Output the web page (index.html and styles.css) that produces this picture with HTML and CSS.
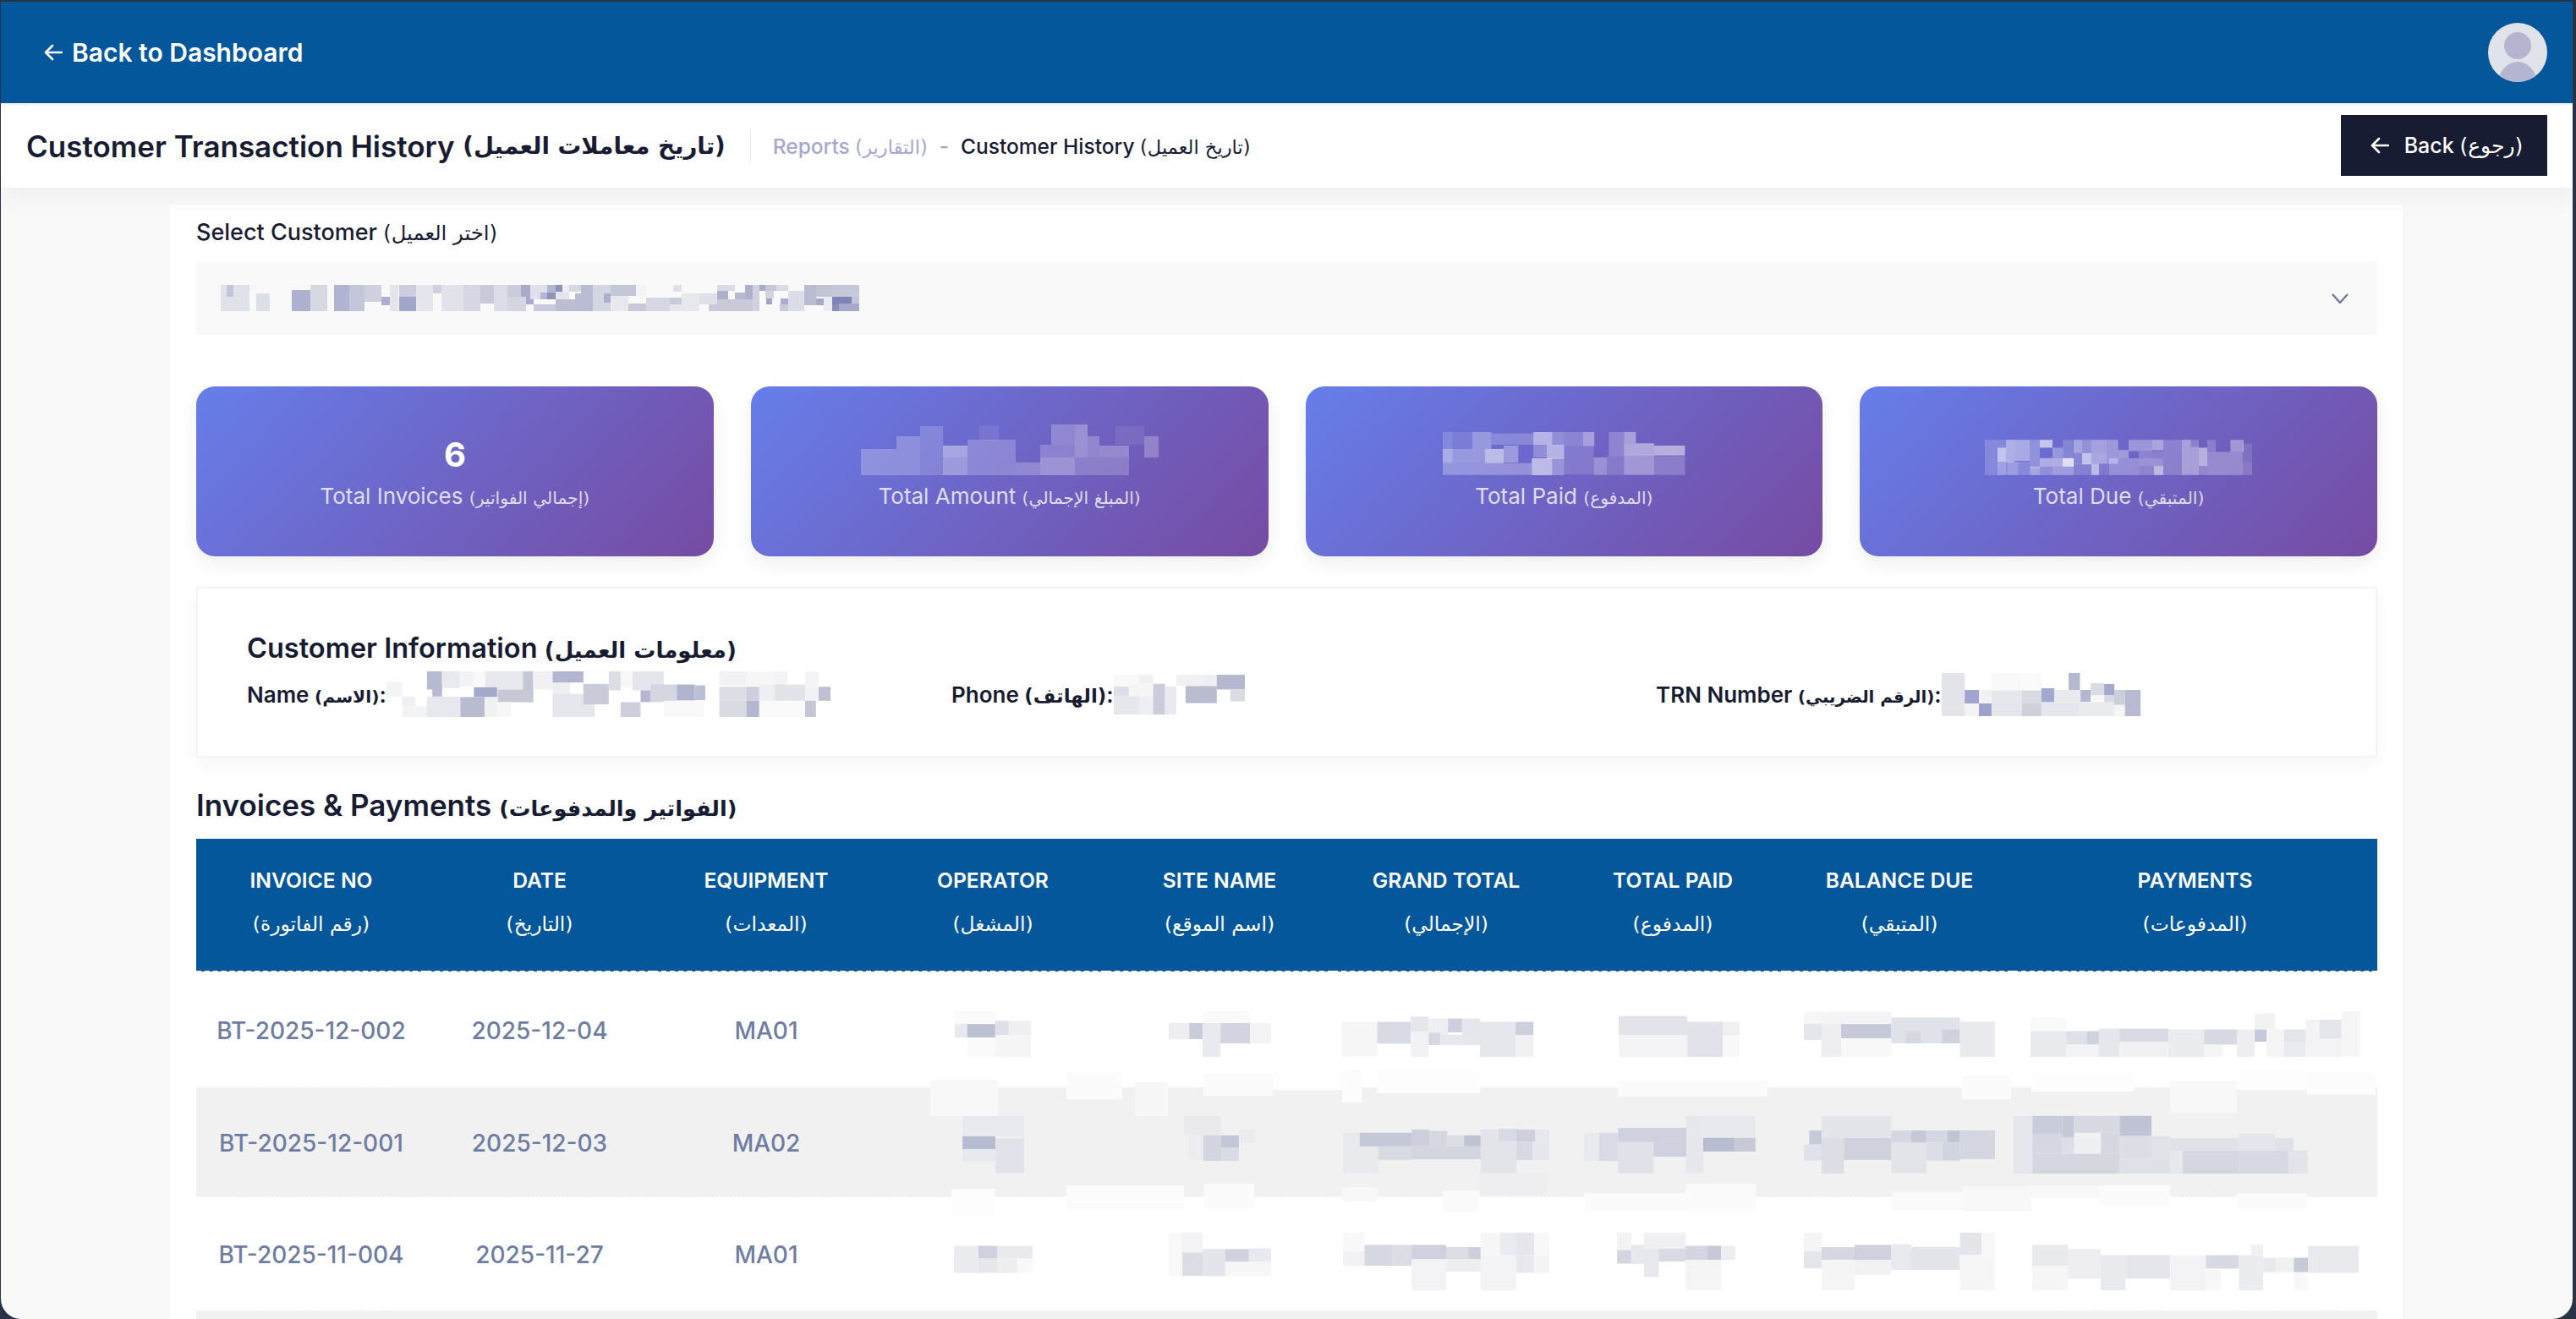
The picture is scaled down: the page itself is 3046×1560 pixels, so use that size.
FILE: index.html
```html
<!DOCTYPE html>
<html lang="en">
<head>
<meta charset="utf-8">
<title>Customer Transaction History</title>
<link rel="stylesheet" href="styles.css">
</head>
<body>
<div class="window">
  <header class="topbar">
    <a class="dash-link"><svg class="ico-back" viewBox="0 0 22 20"><path d="M21 10H2M10 2L2 10l8 8"/></svg>Back to Dashboard</a>
    <svg class="avatar" viewBox="0 0 70 70"><defs><clipPath id="av"><circle cx="35" cy="35" r="35"/></clipPath></defs><circle cx="35" cy="35" r="35" fill="#e1e3ea"/><g clip-path="url(#av)"><circle cx="35" cy="27" r="16" fill="#b5b5d0"/><ellipse cx="35" cy="76" rx="24" ry="30" fill="#b5b5d0"/></g></svg>
  </header>
  <section class="subbar">
    <div class="subbar-left">
      <h1 class="page-title">Customer Transaction History <span class="ar">(تاريخ معاملات العميل)</span></h1>
      <nav class="crumbs"><span class="crumb-muted">Reports <span class="ar">(التقارير)</span></span><span class="crumb-sep">-</span><span class="crumb-now">Customer History <span class="ar">(تاريخ العميل)</span></span></nav>
    </div>
    <a class="btn-back"><svg class="ico-back" viewBox="0 0 22 20"><path d="M21 10H2M10 2L2 10l8 8"/></svg><span>Back <span class="ar">(رجوع)</span></span></a>
  </section>
  <main class="content">
    <div class="card">
      <label class="select-label">Select Customer <span class="ar">(اختر العميل)</span></label>
      <div class="select">
        <svg class="m" width="756" height="31" viewBox="261 336 756 31"><g>
<rect x="261" y="336" width="34" height="31" fill="#e0e2ea"/><rect x="268" y="336" width="8" height="14" fill="#c2c5da"/><rect x="295" y="336" width="50" height="6" fill="#f8f8f9"/><rect x="303" y="346" width="16" height="21" fill="#dddfe8"/><rect x="345" y="342" width="22" height="25" fill="#adb1cd"/><rect x="367" y="336" width="20" height="31" fill="#d6d8e4"/><rect x="395" y="336" width="18" height="31" fill="#b1b4d1"/><rect x="413" y="336" width="18" height="31" fill="#c4c6da"/><rect x="431" y="336" width="20" height="20" fill="#cfd1df"/><rect x="451" y="350" width="10" height="10" fill="#abaed0"/><rect x="461" y="336" width="10" height="31" fill="#e4e5ec"/><rect x="472" y="336" width="20" height="31" fill="#cccedf"/><rect x="472" y="350" width="20" height="17" fill="#a3a6cb"/><rect x="492" y="336" width="20" height="31" fill="#e4e5ed"/><rect x="512" y="336" width="10" height="10" fill="#cdd0de"/><rect x="522" y="336" width="26" height="31" fill="#e2e3ea"/><rect x="548" y="336" width="20" height="31" fill="#d5d7e3"/><rect x="568" y="336" width="16" height="22" fill="#c8cadb"/><rect x="584" y="336" width="16" height="31" fill="#dcdee7"/>
<rect x="600" y="336" width="16" height="20" fill="#c9ccdb"/><rect x="616" y="336" width="11" height="14" fill="#a8abca"/><rect x="600" y="350" width="22" height="17" fill="#d3d5e1"/><rect x="622" y="350" width="9" height="9" fill="#a6a9ca"/><rect x="627" y="336" width="20" height="17" fill="#dfe1ea"/><rect x="647" y="336" width="10" height="9" fill="#b3b6cf"/><rect x="657" y="336" width="8" height="8" fill="#8c90bd"/><rect x="639" y="345" width="8" height="8" fill="#b4b7d3"/><rect x="647" y="345" width="10" height="8" fill="#8f93ba"/><rect x="657" y="344" width="16" height="9" fill="#e4e5ec"/><rect x="673" y="344" width="7" height="9" fill="#fff"/><rect x="665" y="336" width="8" height="8" fill="#eeeff3"/><rect x="673" y="336" width="14" height="8" fill="#d6d8e3"/><rect x="687" y="336" width="14" height="17" fill="#b9bcd2"/><rect x="631" y="359" width="26" height="8" fill="#c8cadb"/><rect x="657" y="353" width="23" height="14" fill="#bbbdd3"/><rect x="680" y="346" width="21" height="21" fill="#b9bcd2"/><rect x="701" y="336" width="21" height="31" fill="#d4d6e2"/><rect x="714" y="346" width="8" height="11" fill="#adb0cc"/><rect x="722" y="336" width="30" height="13" fill="#c4c7d9"/><rect x="722" y="349" width="21" height="18" fill="#e8e9ef"/><rect x="743" y="358" width="21" height="9" fill="#c7c9da"/><rect x="752" y="336" width="12" height="13" fill="#f3f3f4"/><rect x="764" y="351" width="28" height="16" fill="#d5d7e3"/><rect x="792" y="351" width="14" height="8" fill="#c8cbda"/><rect x="796" y="336" width="10" height="8" fill="#dfe1e9"/><rect x="806" y="346" width="21" height="21" fill="#e7e8ed"/><rect x="792" y="359" width="14" height="8" fill="#e6e7ed"/><rect x="827" y="346" width="21" height="13" fill="#dfe1e8"/><rect x="838" y="359" width="60" height="8" fill="#c8cad9"/><rect x="848" y="336" width="21" height="7" fill="#d9dbe5"/><rect x="848" y="343" width="13" height="10" fill="#adb0cd"/><rect x="848" y="353" width="50" height="6" fill="#c8cad9"/><rect x="869" y="345" width="12" height="8" fill="#b7bad1"/><rect x="881" y="336" width="9" height="17" fill="#aeb1cc"/><rect x="890" y="336" width="8" height="31" fill="#d0d2df"/><rect x="898" y="336" width="7" height="7" fill="#a8aaca"/><rect x="905" y="336" width="13" height="7" fill="#c6c8d9"/><rect x="905" y="343" width="10" height="9" fill="#d1d3e0"/><rect x="918" y="336" width="14" height="7" fill="#dadbe4"/><rect x="906" y="352" width="7" height="7" fill="#a1a4c8"/><rect x="923" y="352" width="9" height="7" fill="#a9accb"/><rect x="922" y="359" width="10" height="8" fill="#c8cad9"/><rect x="932" y="343" width="19" height="24" fill="#dcdee7"/><rect x="951" y="336" width="14" height="24" fill="#b9bcd1"/><rect x="965" y="336" width="19" height="14" fill="#c3c5d6"/><rect x="965" y="352" width="9" height="8" fill="#a6a9ca"/><rect x="974" y="350" width="10" height="17" fill="#ecedf1"/><rect x="984" y="336" width="32" height="14" fill="#c5c8d9"/><rect x="984" y="350" width="23" height="9" fill="#7f84b7"/><rect x="984" y="359" width="8" height="8" fill="#8a8ebb"/><rect x="992" y="358" width="24" height="9" fill="#a6a9c9"/><rect x="1007" y="350" width="9" height="8" fill="#c3c5d6"/>
        </g></svg>
        <svg class="chev" viewBox="0 0 20 12"><path d="M1 1l9 10 9-10"/></svg>
      </div>

      <div class="stats">
        <div class="stat">
          <div class="stat-value">6</div>
          <div class="stat-label">Total Invoices <span class="ar">(إجمالي الفواتير)</span></div>
        </div>
        <div class="stat">
          <div class="stat-value"><svg class="m m-soft" width="352" height="60" viewBox="1017 501 352 60" fill="#fff"><rect x="1017" y="530" width="70" height="31" fill-opacity=".3"/><rect x="1059" y="515" width="28" height="15" fill-opacity=".3"/><rect x="1087" y="503" width="27" height="58" fill-opacity=".22"/><rect x="1114" y="526" width="29" height="14" fill-opacity=".5"/><rect x="1114" y="540" width="29" height="21" fill-opacity=".42"/><rect x="1143" y="519" width="57" height="42" fill-opacity=".27"/><rect x="1157" y="502" width="23" height="18" fill-opacity=".1"/><rect x="1200" y="546" width="29" height="15" fill-opacity=".3"/><rect x="1229" y="525" width="41" height="15" fill-opacity=".25"/><rect x="1229" y="540" width="41" height="21" fill-opacity=".4"/><rect x="1242" y="501" width="28" height="24" fill-opacity=".3"/><rect x="1270" y="501" width="15" height="39" fill-opacity=".38"/><rect x="1285" y="515" width="14" height="25" fill-opacity=".3"/><rect x="1270" y="540" width="64" height="21" fill-opacity=".25"/><rect x="1299" y="526" width="35" height="14" fill-opacity=".33"/><rect x="1318" y="503" width="34" height="22" fill-opacity=".1"/><rect x="1352" y="515" width="17" height="25" fill-opacity=".3"/></svg></div>
          <div class="stat-label">Total Amount <span class="ar">(المبلغ الإجمالي)</span></div>
        </div>
        <div class="stat">
          <div class="stat-value"><svg class="m" width="287" height="51" viewBox="790 210 450 153" preserveAspectRatio="none" fill="#fff"><rect x="790" y="210" width="18" height="110" fill-opacity=".18"/><rect x="808" y="210" width="37" height="60" fill-opacity=".1"/><rect x="845" y="210" width="35" height="60" fill-opacity=".3"/><rect x="880" y="215" width="78" height="40" fill-opacity=".2"/><rect x="958" y="210" width="35" height="45" fill-opacity=".5"/><rect x="993" y="210" width="22" height="45" fill-opacity=".25"/><rect x="1015" y="210" width="35" height="50" fill-opacity=".2"/><rect x="1050" y="210" width="21" height="50" fill-opacity=".38"/><rect x="1098" y="210" width="28" height="85" fill-opacity=".22"/><rect x="1126" y="210" width="22" height="40" fill-opacity=".4"/><rect x="1126" y="250" width="56" height="45" fill-opacity=".45"/><rect x="1182" y="258" width="57" height="35" fill-opacity=".5"/><rect x="868" y="270" width="35" height="50" fill-opacity=".55"/><rect x="903" y="258" width="27" height="60" fill-opacity=".33"/><rect x="958" y="255" width="25" height="45" fill-opacity=".25"/><rect x="983" y="255" width="32" height="50" fill-opacity=".5"/><rect x="790" y="270" width="78" height="50" fill-opacity=".3"/><rect x="790" y="320" width="165" height="42" fill-opacity=".28"/><rect x="955" y="303" width="38" height="60" fill-opacity=".55"/><rect x="993" y="303" width="22" height="60" fill-opacity=".3"/><rect x="1015" y="260" width="55" height="100" fill-opacity=".14"/><rect x="1070" y="300" width="24" height="62" fill-opacity=".3"/><rect x="1094" y="295" width="32" height="67" fill-opacity=".16"/><rect x="1126" y="295" width="56" height="67" fill-opacity=".35"/><rect x="1182" y="295" width="57" height="67" fill-opacity=".2"/></svg></div>
          <div class="stat-label">Total Paid <span class="ar">(المدفوع)</span></div>
        </div>
        <div class="stat">
          <div class="stat-value"><svg class="m" width="316" height="42" viewBox="132 82 948 125" fill="#fff"><rect x="132" y="82" width="75" height="125" fill-opacity=".18"/><rect x="207" y="82" width="30" height="80" fill-opacity=".45"/><rect x="177" y="110" width="30" height="50" fill-opacity=".5"/><rect x="237" y="82" width="55" height="75" fill-opacity=".42"/><rect x="292" y="82" width="35" height="100" fill-opacity=".25"/><rect x="327" y="82" width="45" height="28" fill-opacity=".6"/><rect x="372" y="110" width="37" height="37" fill-opacity=".3"/><rect x="327" y="147" width="120" height="30" fill-opacity=".45"/><rect x="408" y="147" width="39" height="30" fill-opacity=".6"/><rect x="177" y="160" width="35" height="47" fill-opacity=".22"/><rect x="212" y="160" width="38" height="47" fill-opacity=".33"/><rect x="250" y="160" width="42" height="47" fill-opacity=".2"/><rect x="292" y="177" width="35" height="30" fill-opacity=".4"/><rect x="327" y="177" width="45" height="30" fill-opacity=".25"/><rect x="372" y="177" width="75" height="30" fill-opacity=".35"/><rect x="408" y="82" width="38" height="65" fill-opacity=".18"/><rect x="447" y="82" width="30" height="47" fill-opacity=".4"/><rect x="477" y="82" width="33" height="47" fill-opacity=".27"/><rect x="510" y="82" width="55" height="45" fill-opacity=".38"/><rect x="565" y="82" width="40" height="85" fill-opacity=".33"/><rect x="447" y="129" width="30" height="40" fill-opacity=".2"/><rect x="477" y="129" width="33" height="40" fill-opacity=".6"/><rect x="510" y="127" width="55" height="40" fill-opacity=".42"/><rect x="447" y="167" width="63" height="40" fill-opacity=".17"/><rect x="510" y="167" width="27" height="40" fill-opacity=".55"/><rect x="537" y="167" width="36" height="40" fill-opacity=".12"/><rect x="573" y="147" width="105" height="60" fill-opacity=".28"/><rect x="605" y="118" width="37" height="29" fill-opacity=".35"/><rect x="642" y="82" width="83" height="40" fill-opacity=".32"/><rect x="725" y="82" width="40" height="37" fill-opacity=".42"/><rect x="678" y="122" width="45" height="25" fill-opacity=".2"/><rect x="723" y="122" width="42" height="25" fill-opacity=".18"/><rect x="678" y="147" width="87" height="28" fill-opacity=".3"/><rect x="678" y="175" width="54" height="32" fill-opacity=".22"/><rect x="732" y="175" width="33" height="32" fill-opacity=".55"/><rect x="765" y="82" width="66" height="125" fill-opacity=".2"/><rect x="831" y="82" width="32" height="125" fill-opacity=".4"/><rect x="863" y="82" width="28" height="25" fill-opacity=".2"/><rect x="863" y="107" width="28" height="100" fill-opacity=".4"/><rect x="891" y="110" width="30" height="65" fill-opacity=".5"/><rect x="891" y="175" width="30" height="32" fill-opacity=".25"/><rect x="921" y="82" width="30" height="43" fill-opacity=".2"/><rect x="921" y="125" width="125" height="82" fill-opacity=".28"/><rect x="1003" y="82" width="47" height="43" fill-opacity=".35"/><rect x="1045" y="95" width="35" height="65" fill-opacity=".12"/><rect x="1045" y="160" width="35" height="47" fill-opacity=".18"/></svg></div>
          <div class="stat-label">Total Due <span class="ar">(المتبقي)</span></div>
        </div>
      </div>

      <section class="info">
        <h2 class="info-title">Customer Information <span class="ar">(معلومات العميل)</span></h2>
        <div class="info-grid">
          <div class="info-item"><b>Name <span class="ar">(الاسم)</span>:</b><svg class="m" width="525" height="54" viewBox="402 1075 823 163" preserveAspectRatio="none"><rect x="402" y="1113" width="29" height="52" fill="#f4f4f6"/><rect x="431" y="1165" width="24" height="35" fill="#eeeff2"/><rect x="431" y="1200" width="46" height="38" fill="#f3f3f5"/><rect x="477" y="1075" width="28" height="65" fill="#b7bbd2"/><rect x="487" y="1120" width="18" height="45" fill="#b5b9d1"/><rect x="505" y="1075" width="33" height="60" fill="#e9eaef"/><rect x="538" y="1075" width="25" height="55" fill="#f3f3f5"/><rect x="563" y="1075" width="22" height="55" fill="#f9f9fa"/><rect x="585" y="1075" width="70" height="65" fill="#e8e9ee"/><rect x="655" y="1075" width="19" height="110" fill="#c4c7d5"/><rect x="608" y="1140" width="66" height="45" fill="#c6c9d6"/><rect x="564" y="1132" width="43" height="35" fill="#a4a8c9"/><rect x="564" y="1167" width="20" height="30" fill="#d5d8e2"/><rect x="477" y="1165" width="62" height="73" fill="#e7e8ed"/><rect x="539" y="1167" width="45" height="71" fill="#b9bcd0"/><rect x="585" y="1167" width="23" height="71" fill="#f0f1f3"/><rect x="608" y="1185" width="25" height="53" fill="#f7f7f8"/><rect x="674" y="1075" width="36" height="65" fill="#f1f1f3"/><rect x="710" y="1115" width="32" height="100" fill="#eeeff2"/><rect x="710" y="1075" width="57" height="40" fill="#b2b5cf"/><rect x="710" y="1155" width="78" height="83" fill="#e6e7ec"/><rect x="767" y="1120" width="47" height="73" fill="#c9ccd8"/><rect x="814" y="1075" width="22" height="68" fill="#dcdee6"/><rect x="836" y="1075" width="22" height="55" fill="#f7f7f8"/><rect x="858" y="1075" width="58" height="68" fill="#e5e6ec"/><rect x="873" y="1143" width="19" height="42" fill="#b3b7cf"/><rect x="892" y="1122" width="48" height="63" fill="#d4d6e1"/><rect x="940" y="1122" width="33" height="57" fill="#b0b4cf"/><rect x="973" y="1125" width="20" height="53" fill="#bcc0d5"/><rect x="836" y="1185" width="37" height="53" fill="#cdd0dc"/><rect x="916" y="1180" width="74" height="58" fill="#f9f9fa"/><rect x="1019" y="1075" width="49" height="50" fill="#f1f1f3"/><rect x="1068" y="1075" width="52" height="50" fill="#f6f6f7"/><rect x="1120" y="1075" width="25" height="50" fill="#f3f3f5"/><rect x="1178" y="1075" width="25" height="55" fill="#f4f4f6"/><rect x="1019" y="1130" width="50" height="50" fill="#dcdee6"/><rect x="1019" y="1180" width="50" height="58" fill="#d9dbe3"/><rect x="1069" y="1130" width="24" height="50" fill="#cdd0dc"/><rect x="1069" y="1180" width="24" height="58" fill="#b4b8cf"/><rect x="1093" y="1122" width="28" height="58" fill="#eeeff2"/><rect x="1121" y="1122" width="57" height="58" fill="#e1e3e9"/><rect x="1178" y="1130" width="25" height="50" fill="#f2f2f4"/><rect x="1203" y="1130" width="22" height="50" fill="#bdc0d3"/><rect x="1093" y="1180" width="85" height="58" fill="#fafafa"/><rect x="1178" y="1180" width="20" height="58" fill="#c3c6d5"/></svg></div>
          <div class="info-item"><b>Phone <span class="ar ar-phone">(الهاتف)</span>:</b><svg class="m" width="155" height="47" viewBox="179 1090 243 140" preserveAspectRatio="none"><rect x="179" y="1090" width="47" height="45" fill="#f9f9fa"/><rect x="226" y="1090" width="26" height="32" fill="#f1f1f3"/><rect x="207" y="1122" width="45" height="42" fill="#f5f5f6"/><rect x="179" y="1132" width="28" height="33" fill="#dddfe7"/><rect x="179" y="1165" width="47" height="65" fill="#e6e7ec"/><rect x="226" y="1165" width="27" height="65" fill="#eeeff2"/><rect x="252" y="1122" width="22" height="108" fill="#c9ccd9"/><rect x="274" y="1132" width="21" height="98" fill="#e9eaef"/><rect x="295" y="1090" width="50" height="40" fill="#f1f1f3"/><rect x="345" y="1090" width="25" height="40" fill="#eeeff2"/><rect x="370" y="1090" width="52" height="52" fill="#b5b8ce"/><rect x="312" y="1130" width="58" height="60" fill="#b9bccf"/><rect x="395" y="1142" width="27" height="42" fill="#dadce4"/></svg></div>
          <div class="info-item"><b>TRN Number <span class="ar ar-trn">(الرقم الضريبي)</span>:</b><svg class="m" width="235" height="51" viewBox="899 45 614 153" preserveAspectRatio="none"><rect x="899" y="45" width="71" height="153" fill="#e3e4ea"/><rect x="970" y="105" width="44" height="48" fill="#a1a4cd"/><rect x="1014" y="105" width="39" height="48" fill="#f1f1f4"/><rect x="970" y="153" width="44" height="45" fill="#f3f3f5"/><rect x="1014" y="153" width="39" height="45" fill="#9da2cb"/><rect x="1053" y="45" width="94" height="62" fill="#f9f9fa"/><rect x="1053" y="107" width="94" height="91" fill="#e6e7ec"/><rect x="1147" y="45" width="60" height="62" fill="#fbfbfc"/><rect x="1147" y="107" width="60" height="45" fill="#d9dbe3"/><rect x="1147" y="152" width="60" height="46" fill="#ced1da"/><rect x="1207" y="148" width="120" height="50" fill="#e6e7ec"/><rect x="1207" y="99" width="40" height="49" fill="#a4a8ce"/><rect x="1247" y="105" width="80" height="43" fill="#e9eaee"/><rect x="1291" y="45" width="35" height="60" fill="#b4b8d0"/><rect x="1328" y="105" width="31" height="42" fill="#b3b6cf"/><rect x="1359" y="81" width="42" height="42" fill="#dadce5"/><rect x="1401" y="84" width="31" height="39" fill="#a4a8cf"/><rect x="1359" y="123" width="42" height="35" fill="#f6f6f7"/><rect x="1401" y="123" width="31" height="35" fill="#d8dae3"/><rect x="1327" y="148" width="105" height="50" fill="#eaebef"/><rect x="1432" y="158" width="33" height="40" fill="#f5f5f6"/><rect x="1432" y="105" width="33" height="53" fill="#ccceda"/><rect x="1465" y="105" width="48" height="93" fill="#b7bad0"/></svg></div>
        </div>
      </section>

      <h2 class="section-title">Invoices &amp; Payments <span class="ar">(الفواتير والمدفوعات)</span></h2>
      <div class="table-wrap">
        <table class="tx">
          <colgroup><col class="c-first"><col class="c-std"><col class="c-std"><col class="c-std"><col class="c-std"><col class="c-std"><col class="c-std"><col class="c-std"><col class="c-last"></colgroup>
          <thead>
            <tr>
              <th>INVOICE NO<span class="th-ar ar">(رقم الفاتورة)</span></th>
              <th>DATE<span class="th-ar ar">(التاريخ)</span></th>
              <th>EQUIPMENT<span class="th-ar ar">(المعدات)</span></th>
              <th>OPERATOR<span class="th-ar ar">(المشغل)</span></th>
              <th>SITE NAME<span class="th-ar ar">(اسم الموقع)</span></th>
              <th>GRAND TOTAL<span class="th-ar ar">(الإجمالي)</span></th>
              <th>TOTAL PAID<span class="th-ar ar">(المدفوع)</span></th>
              <th>BALANCE DUE<span class="th-ar ar">(المتبقي)</span></th>
              <th>PAYMENTS<span class="th-ar ar">(المدفوعات)</span></th>
            </tr>
          </thead>
          <tbody>
            <tr class="r1">
              <td>BT-2025-12-002</td><td>2025-12-04</td><td>MA01</td>
              <td><svg class="m" width="90" height="61" viewBox="49 597 141 160" preserveAspectRatio="none"><rect x="49" y="615" width="75" height="40" fill="#fafafa"/><rect x="49" y="655" width="23" height="42" fill="#e8e9ee"/><rect x="72" y="655" width="52" height="42" fill="#bcc1d2"/><rect x="124" y="645" width="25" height="45" fill="#dfe1e9"/><rect x="149" y="645" width="41" height="45" fill="#f0f0f3"/><rect x="72" y="697" width="52" height="60" fill="#fafafa"/><rect x="124" y="690" width="66" height="67" fill="#f5f5f6"/></svg></td>
              <td><svg class="m" width="121" height="61" viewBox="445 597 190 160" preserveAspectRatio="none"><rect x="508" y="615" width="88" height="38" fill="#fafafa"/><rect x="445" y="652" width="38" height="50" fill="#eeeef2"/><rect x="483" y="652" width="25" height="50" fill="#c9cdda"/><rect x="508" y="652" width="33" height="105" fill="#e9eaef"/><rect x="541" y="652" width="55" height="63" fill="#d2d5e0"/><rect x="596" y="652" width="39" height="63" fill="#f3f3f5"/></svg></td>
              <td><svg class="m" width="246" height="61" viewBox="764 597 385 160" preserveAspectRatio="none"><rect x="764" y="648" width="65" height="109" fill="#f6f6f7"/><rect x="829" y="648" width="62" height="68" fill="#d9dbe4"/><rect x="891" y="632" width="33" height="48" fill="#e6e7ed"/><rect x="924" y="638" width="36" height="50" fill="#eeeff3"/><rect x="960" y="638" width="26" height="43" fill="#ccd0dc"/><rect x="986" y="638" width="33" height="82" fill="#e6e7ec"/><rect x="891" y="680" width="33" height="77" fill="#f2f2f4"/><rect x="924" y="682" width="22" height="38" fill="#d5d8e2"/><rect x="946" y="688" width="40" height="32" fill="#e7e8ee"/><rect x="1019" y="648" width="66" height="109" fill="#e6e7ed"/><rect x="1085" y="648" width="33" height="42" fill="#ccd0dc"/><rect x="1085" y="690" width="33" height="67" fill="#f1f1f4"/></svg></td>
              <td><svg class="m" width="157" height="61" viewBox="1253 597 246 160" preserveAspectRatio="none"><rect x="1275" y="630" width="127" height="60" fill="#e3e4ea"/><rect x="1402" y="648" width="66" height="109" fill="#e2e3ea"/><rect x="1275" y="690" width="127" height="67" fill="#f4f4f6"/><rect x="1468" y="648" width="31" height="42" fill="#f0f0f3"/><rect x="1468" y="690" width="31" height="67" fill="#f8f8f9"/></svg></td>
              <td><svg class="m" width="226" height="61" viewBox="141 597 354 160" preserveAspectRatio="none"><rect x="141" y="617" width="33" height="38" fill="#f6f6f7"/><rect x="174" y="617" width="129" height="38" fill="#f4f4f6"/><rect x="141" y="655" width="33" height="50" fill="#e5e6ec"/><rect x="174" y="655" width="36" height="102" fill="#eeeef2"/><rect x="210" y="655" width="93" height="45" fill="#c6cad8"/><rect x="210" y="700" width="93" height="57" fill="#f8f8f9"/><rect x="303" y="635" width="127" height="80" fill="#e0e2e9"/><rect x="330" y="680" width="27" height="35" fill="#d5d8e1"/><rect x="397" y="672" width="33" height="43" fill="#cfd2dd"/><rect x="430" y="648" width="65" height="109" fill="#e9eaee"/></svg></td>
              <td><svg class="m" width="390" height="61" viewBox="558 597 612 160" preserveAspectRatio="none"><rect x="558" y="635" width="66" height="42" fill="#f9f9fa"/><rect x="558" y="677" width="66" height="80" fill="#e9eaee"/><rect x="624" y="677" width="38" height="42" fill="#dfe1e8"/><rect x="662" y="677" width="23" height="42" fill="#cfd2dd"/><rect x="624" y="719" width="61" height="38" fill="#f3f3f5"/><rect x="685" y="669" width="38" height="88" fill="#e6e7ed"/><rect x="723" y="669" width="91" height="42" fill="#d9dbe4"/><rect x="723" y="711" width="91" height="46" fill="#f1f1f4"/><rect x="814" y="672" width="66" height="85" fill="#ebecf0"/><rect x="880" y="672" width="61" height="47" fill="#d8dae3"/><rect x="880" y="719" width="35" height="38" fill="#f5f5f6"/><rect x="941" y="672" width="33" height="85" fill="#eeeef1"/><rect x="974" y="622" width="38" height="50" fill="#f2f2f3"/><rect x="974" y="672" width="22" height="38" fill="#c6cad8"/><rect x="996" y="672" width="32" height="85" fill="#f5f5f6"/><rect x="1028" y="672" width="41" height="38" fill="#e3e5ea"/><rect x="1028" y="710" width="41" height="47" fill="#eaebf0"/><rect x="1069" y="642" width="66" height="115" fill="#f3f3f5"/><rect x="1094" y="642" width="41" height="58" fill="#e5e6eb"/><rect x="1135" y="615" width="35" height="142" fill="#f6f6f7"/></svg></td>
            </tr>
            <tr class="r2">
              <td>BT-2025-12-001</td><td>2025-12-03</td><td>MA02</td>
              <td><svg class="m" width="73" height="72" viewBox="63 928 114 188" preserveAspectRatio="none"><rect x="63" y="938" width="114" height="63" fill="#e9eaef"/><rect x="63" y="1001" width="61" height="40" fill="#b8bcd0"/><rect x="124" y="1007" width="53" height="108" fill="#e2e3ea"/><rect x="63" y="1041" width="61" height="37" fill="#e8e9ee"/></svg></td>
              <td><svg class="m" width="84" height="72" viewBox="472 928 132 188" preserveAspectRatio="none"><rect x="472" y="938" width="68" height="60" fill="#e9e9ee"/><rect x="482" y="998" width="26" height="75" fill="#ecedf1"/><rect x="508" y="998" width="33" height="79" fill="#d3d6e1"/><rect x="541" y="998" width="33" height="37" fill="#c2c6d6"/><rect x="541" y="1035" width="33" height="42" fill="#dadce5"/><rect x="574" y="980" width="30" height="42" fill="#ececf0"/></svg></td>
              <td><svg class="m" width="244" height="72" viewBox="764 928 382 188" preserveAspectRatio="none"><rect x="764" y="990" width="65" height="125" fill="#e9eaee"/><rect x="795" y="990" width="96" height="42" fill="#c5c9d7"/><rect x="829" y="1032" width="62" height="42" fill="#d9dbe3"/><rect x="891" y="980" width="33" height="52" fill="#cdd0dc"/><rect x="924" y="984" width="33" height="48" fill="#d5d7e1"/><rect x="957" y="998" width="31" height="34" fill="#dcdee6"/><rect x="988" y="998" width="31" height="34" fill="#bfc3d3"/><rect x="891" y="1032" width="128" height="40" fill="#d3d5df"/><rect x="1019" y="980" width="33" height="38" fill="#e4e5eb"/><rect x="1052" y="978" width="33" height="40" fill="#d8dbe4"/><rect x="1085" y="980" width="35" height="38" fill="#cdd0dc"/><rect x="1120" y="980" width="26" height="38" fill="#e7e8ed"/><rect x="1019" y="1018" width="66" height="97" fill="#e3e4ea"/><rect x="1085" y="1018" width="30" height="56" fill="#d7d9e3"/><rect x="1115" y="1018" width="31" height="56" fill="#e6e7ec"/></svg></td>
              <td><svg class="m" width="211" height="72" viewBox="1212 928 331 188" preserveAspectRatio="none"><rect x="1212" y="990" width="28" height="87" fill="#e9eaee"/><rect x="1240" y="990" width="35" height="87" fill="#dadce5"/><rect x="1275" y="975" width="127" height="44" fill="#cfd2de"/><rect x="1275" y="1019" width="66" height="96" fill="#e1e2e9"/><rect x="1341" y="1019" width="61" height="45" fill="#cfd2de"/><rect x="1402" y="938" width="31" height="177" fill="#e7e8ed"/><rect x="1433" y="938" width="97" height="68" fill="#e8e9ee"/><rect x="1433" y="1006" width="59" height="42" fill="#b9bdd0"/><rect x="1492" y="1006" width="38" height="42" fill="#c6cad7"/></svg></td>
              <td><svg class="m" width="226" height="72" viewBox="141 928 354 188" preserveAspectRatio="none"><rect x="151" y="983" width="23" height="43" fill="#c6cad8"/><rect x="141" y="1026" width="33" height="50" fill="#e0e2e9"/><rect x="174" y="938" width="129" height="68" fill="#e4e5eb"/><rect x="174" y="1006" width="41" height="110" fill="#dcdee6"/><rect x="215" y="1006" width="88" height="68" fill="#cfd2dd"/><rect x="303" y="1020" width="65" height="95" fill="#e3e4ea"/><rect x="303" y="983" width="127" height="37" fill="#d5d7e1"/><rect x="340" y="983" width="27" height="37" fill="#c5c9d7"/><rect x="407" y="983" width="23" height="37" fill="#c0c4d3"/><rect x="368" y="1020" width="30" height="56" fill="#dcdee6"/><rect x="398" y="1020" width="32" height="56" fill="#d2d5df"/><rect x="430" y="983" width="65" height="88" fill="#d4d6e0"/></svg></td>
              <td><svg class="m" width="430" height="72" viewBox="523 928 675 188" preserveAspectRatio="none"><rect x="523" y="938" width="35" height="178" fill="#e6e7ec"/><rect x="558" y="938" width="55" height="55" fill="#c9ccda"/><rect x="613" y="938" width="22" height="67" fill="#c5c9d7"/><rect x="635" y="938" width="50" height="52" fill="#d7d9e3"/><rect x="685" y="938" width="35" height="52" fill="#d7d9e3"/><rect x="720" y="938" width="59" height="62" fill="#bfc3d3"/><rect x="558" y="993" width="55" height="62" fill="#d4d6e0"/><rect x="613" y="1005" width="22" height="50" fill="#dcdee5"/><rect x="635" y="1005" width="50" height="47" fill="#eeeff3"/><rect x="685" y="990" width="35" height="65" fill="#d4d6e0"/><rect x="720" y="1000" width="60" height="70" fill="#dcdee5"/><rect x="558" y="1055" width="162" height="61" fill="#d4d6e0"/><rect x="720" y="1070" width="94" height="46" fill="#dfe1e8"/><rect x="780" y="1000" width="34" height="70" fill="#e1e3e9"/><rect x="814" y="1006" width="127" height="40" fill="#e0e2e8"/><rect x="837" y="1046" width="104" height="70" fill="#d4d6e0"/><rect x="814" y="1046" width="23" height="70" fill="#e7e8ed"/><rect x="941" y="993" width="66" height="52" fill="#e5e6eb"/><rect x="941" y="1045" width="92" height="71" fill="#d7d9e2"/><rect x="1007" y="1006" width="36" height="40" fill="#e0e2e8"/><rect x="1033" y="1045" width="36" height="71" fill="#e3e4ea"/></svg></td>
            </tr>
            <tr class="r3">
              <td>BT-2025-11-004</td><td>2025-11-27</td><td>MA01</td>
              <td><svg class="m" width="93" height="83" viewBox="44 1258 146 218" preserveAspectRatio="none"><rect x="44" y="1338" width="45" height="84" fill="#ebecf0"/><rect x="89" y="1338" width="35" height="40" fill="#cfd2de"/><rect x="89" y="1378" width="35" height="44" fill="#e6e7ec"/><rect x="124" y="1338" width="66" height="40" fill="#e9eaee"/><rect x="124" y="1378" width="38" height="44" fill="#eeeef1"/><rect x="162" y="1378" width="28" height="44" fill="#f8f8f9"/></svg></td>
              <td><svg class="m" width="121" height="83" viewBox="445 1258 190 218" preserveAspectRatio="none"><rect x="445" y="1297" width="25" height="135" fill="#f8f8f9"/><rect x="470" y="1297" width="38" height="62" fill="#f3f3f5"/><rect x="470" y="1359" width="38" height="72" fill="#dbdde5"/><rect x="508" y="1348" width="42" height="84" fill="#e4e5eb"/><rect x="550" y="1348" width="44" height="40" fill="#cfd2de"/><rect x="550" y="1388" width="44" height="44" fill="#f7f7f8"/><rect x="594" y="1346" width="41" height="42" fill="#e8e9ee"/><rect x="594" y="1388" width="41" height="44" fill="#f7f7f8"/></svg></td>
              <td><svg class="m" width="244" height="83" viewBox="764 1258 382 218" preserveAspectRatio="none"><rect x="764" y="1297" width="40" height="58" fill="#f8f8f9"/><rect x="764" y="1355" width="40" height="45" fill="#f2f2f4"/><rect x="804" y="1335" width="52" height="65" fill="#d5d7e1"/><rect x="856" y="1335" width="35" height="65" fill="#dbdde5"/><rect x="891" y="1335" width="64" height="45" fill="#cfd2de"/><rect x="891" y="1380" width="64" height="96" fill="#f3f3f5"/><rect x="955" y="1342" width="41" height="38" fill="#dcdee6"/><rect x="996" y="1342" width="23" height="38" fill="#cdd0dc"/><rect x="955" y="1380" width="64" height="38" fill="#eeeef1"/><rect x="1019" y="1297" width="36" height="70" fill="#f6f6f7"/><rect x="1055" y="1297" width="30" height="70" fill="#eaebf0"/><rect x="1085" y="1297" width="33" height="70" fill="#e5e6eb"/><rect x="1118" y="1297" width="28" height="70" fill="#f8f8f9"/><rect x="1019" y="1367" width="66" height="109" fill="#f3f3f5"/><rect x="1085" y="1367" width="33" height="55" fill="#e8e9ee"/><rect x="1118" y="1367" width="28" height="55" fill="#f4f4f6"/></svg></td>
              <td><svg class="m" width="153" height="83" viewBox="1259 1258 240 218" preserveAspectRatio="none"><rect x="1275" y="1297" width="26" height="54" fill="#f3f3f5"/><rect x="1275" y="1351" width="26" height="42" fill="#d3d6e0"/><rect x="1301" y="1335" width="24" height="60" fill="#e7e8ed"/><rect x="1325" y="1297" width="77" height="50" fill="#f0f0f3"/><rect x="1325" y="1347" width="27" height="88" fill="#e7e8ed"/><rect x="1352" y="1347" width="50" height="40" fill="#d9dbe4"/><rect x="1402" y="1338" width="40" height="44" fill="#d3d6e0"/><rect x="1442" y="1338" width="26" height="44" fill="#c6cad8"/><rect x="1468" y="1338" width="26" height="44" fill="#eeeef1"/><rect x="1402" y="1382" width="66" height="94" fill="#f5f5f6"/></svg></td>
              <td><svg class="m" width="226" height="83" viewBox="141 1258 354 218" preserveAspectRatio="none"><rect x="141" y="1297" width="33" height="58" fill="#f5f5f6"/><rect x="141" y="1355" width="33" height="53" fill="#e5e6eb"/><rect x="174" y="1342" width="129" height="40" fill="#d5d7e1"/><rect x="235" y="1335" width="68" height="47" fill="#cfd2de"/><rect x="174" y="1382" width="61" height="94" fill="#f5f5f6"/><rect x="235" y="1382" width="68" height="46" fill="#f2f2f4"/><rect x="303" y="1333" width="37" height="80" fill="#e9eaee"/><rect x="340" y="1342" width="90" height="71" fill="#e3e4ea"/><rect x="430" y="1297" width="40" height="70" fill="#e4e5ea"/><rect x="470" y="1297" width="25" height="70" fill="#f7f7f8"/><rect x="430" y="1367" width="65" height="109" fill="#f6f6f7"/></svg></td>
              <td><svg class="m" width="386" height="83" viewBox="558 1258 605 218" preserveAspectRatio="none"><rect x="558" y="1335" width="66" height="66" fill="#e9eaee"/><rect x="558" y="1401" width="66" height="75" fill="#f6f6f7"/><rect x="624" y="1348" width="61" height="92" fill="#eeeef1"/><rect x="685" y="1367" width="46" height="109" fill="#e9eaee"/><rect x="731" y="1367" width="83" height="73" fill="#e5e6eb"/><rect x="814" y="1367" width="66" height="109" fill="#f3f3f5"/><rect x="880" y="1367" width="61" height="42" fill="#d8dae3"/><rect x="880" y="1409" width="27" height="67" fill="#f7f7f8"/><rect x="941" y="1367" width="45" height="109" fill="#ebecf0"/><rect x="964" y="1335" width="22" height="32" fill="#f0f0f3"/><rect x="986" y="1375" width="24" height="45" fill="#e8e9ee"/><rect x="1010" y="1375" width="33" height="45" fill="#f1f1f3"/><rect x="1043" y="1375" width="26" height="45" fill="#c6cad8"/><rect x="1069" y="1338" width="94" height="84" fill="#e9eaee"/><rect x="1043" y="1420" width="26" height="56" fill="#f8f8f9"/></svg></td>
            </tr>
            <tr class="r4"><td colspan="9"></td></tr>
          </tbody>
        </table>
        <svg class="band" width="1751" height="200" viewBox="1060 1260 1751 200"><rect x="1100" y="1277" width="80" height="43" fill="#f8f8f9"/><rect x="1261" y="1268" width="66" height="32" fill="#fbfbfb"/><rect x="1342" y="1280" width="39" height="40" fill="#f7f7f7"/><rect x="1423" y="1270" width="82" height="26" fill="#fbfbfb"/><rect x="1505" y="1266" width="85" height="23" fill="#fefefe"/><rect x="1587" y="1265" width="23" height="39" fill="#fcfcfc"/><rect x="1628" y="1266" width="122" height="27" fill="#fdfdfd"/><rect x="1913" y="1277" width="177" height="20" fill="#fbfbfb"/><rect x="2320" y="1272" width="58" height="28" fill="#fbfbfb"/><rect x="2402" y="1268" width="122" height="23" fill="#fdfdfd"/><rect x="2566" y="1278" width="79" height="38" fill="#f8f8f8"/><rect x="2645" y="1265" width="83" height="24" fill="#fdfdfd"/><rect x="2728" y="1268" width="81" height="27" fill="#fcfcfc"/><rect x="1125" y="1406" width="51" height="30" fill="#fdfdfd"/><rect x="1261" y="1402" width="139" height="29" fill="#fcfcfc"/><rect x="1424" y="1400" width="59" height="29" fill="#fbfbfb"/><rect x="1587" y="1404" width="42" height="17" fill="#f8f8f8"/><rect x="1706" y="1408" width="43" height="25" fill="#fafafa"/><rect x="1750" y="1387" width="80" height="26" fill="#eeeef0"/><rect x="1873" y="1411" width="203" height="22" fill="#fbfbfb"/><rect x="1993" y="1400" width="83" height="27" fill="#fafafa"/><rect x="2237" y="1410" width="83" height="21" fill="#fafafa"/><rect x="2320" y="1403" width="82" height="30" fill="#f8f8f8"/><rect x="2402" y="1402" width="81" height="15" fill="#f8f8f8"/><rect x="2483" y="1402" width="83" height="23" fill="#fbfbfb"/><rect x="2645" y="1411" width="83" height="18" fill="#fbfbfb"/></svg>
      </div>
    </div>
  </main>
</div>
</body>
</html>
```

FILE: styles.css
```css
* { box-sizing: border-box; }
html, body { margin: 0; height: 100%; overflow: hidden; }
body {
  background: #2a3346;
  font-family: Inter, "DejaVu Sans", "Noto Sans", sans-serif;
  color: #181c32;
  padding: 2px 4px 0 1px;
}
h1, h2 { margin: 0; }
.ar { font-family: "DejaVu Sans", "Noto Sans", sans-serif; }

.window {
  height: 1558px;
  background: #f9f9f9;
  border-radius: 0 0 24px 24px;
  overflow: hidden;
  display: flex;
  flex-direction: column;
}

.topbar {
  flex: none;
  height: 120px;
  background: #04579b;
  display: flex;
  align-items: center;
  justify-content: space-between;
  padding: 0 30px 0 51px;
}
.dash-link {
  display: flex;
  align-items: center;
  gap: 11px;
  color: #fff;
  font-size: 30px;
  font-weight: 600;
}
.ico-back { width: 22px; height: 20px; flex: none; fill: none; stroke: #fff; stroke-width: 2.6; stroke-linecap: round; stroke-linejoin: round; }
.avatar { width: 70px; height: 70px; display: block; }

.subbar {
  flex: none;
  position: relative;
  z-index: 2;
  height: 100px;
  background: #fff;
  border-top: 2px solid #f1f1f1;
  box-shadow: 0 10px 30px rgba(0, 0, 0, .05);
  display: flex;
  align-items: center;
  justify-content: space-between;
  padding: 0 30px;
}
.subbar-left { display: flex; align-items: center; }
.page-title {
  font-size: 35px;
  font-weight: 600;
  line-height: 50px;
  white-space: nowrap;
  padding-right: 29px;
  border-right: 1px solid #e8e8ec;
  height: 40px;
  display: flex;
  align-items: center;
  gap: .28em;
}
.page-title .ar { font-size: .79em; }
.crumbs { display: flex; align-items: center; gap: 14px; padding-left: 26px; font-size: 24.5px; font-weight: 500; white-space: nowrap; }
.crumbs .ar { font-size: .92em; }
.crumb-muted { color: #a5a7d0; }
.crumb-sep { color: #a1a5b7; }
.crumb-now { color: #181c32; }
.btn-back {
  width: 244px;
  height: 72px;
  margin-top: -2px;
  padding-left: 6px;
  background: #181c32;
  color: #fff;
  font-size: 25px;
  font-weight: 500;
  display: flex;
  align-items: center;
  justify-content: center;
  gap: 18px;
  white-space: nowrap;
}

.content { flex: 1; padding: 20px 201px 0 200px; min-height: 0; }
.card { background: #fff; padding: 13px 30px 0 31px; height: 100%; }
.select-label { display: block; height: 40px; font-size: 27px; font-weight: 500; line-height: 40px; }
.select-label .ar { font-size: .9em; line-height: 1; }
.select {
  margin-top: 14px;
  height: 87px;
  background: #f9f9f9;
  display: flex;
  align-items: center;
  justify-content: space-between;
  padding: 0 34px 0 29px;
}
.m { display: block; flex: none; }
.m-soft { opacity: .8; }
.chev { width: 20px; height: 12px; fill: none; stroke: #6a7a9c; stroke-width: 2.4; }

.stats {
  margin-top: 61px;
  display: grid;
  grid-template-columns: repeat(4, 1fr);
  gap: 44px;
}
.stat {
  height: 201px;
  border-radius: 22px;
  background: linear-gradient(135deg, #667eea 0%, #764ba2 100%);
  box-shadow: 0 8px 22px rgba(0, 0, 0, .07);
  display: flex;
  flex-direction: column;
  align-items: center;
  padding-top: 57px;
  color: #fff;
}
.stat-value {
  height: 48px;
  display: flex;
  align-items: flex-end;
  justify-content: center;
  font-size: 40px;
  font-weight: 700;
  line-height: 48px;
}
.stat-label { margin-top: 5px; font-size: 26px; line-height: 40px; white-space: nowrap; color: rgba(255, 255, 255, .78); }
.stat-label .ar { font-size: .78em; }

.info {
  margin-top: 36px;
  height: 202px;
  border: 2px solid #f3f3f4;
  box-shadow: 0 8px 20px rgba(0, 0, 0, .04);
  padding: 46px 58px 0;
}
.info-title { height: 50px; font-size: 32.5px; font-weight: 600; line-height: 50px; }
.info-title .ar { font-size: .8em; line-height: 1; }
.info-grid { margin-top: 2px; display: grid; grid-template-columns: repeat(3, 833px); }
.info-item { display: flex; align-items: center; height: 54px; font-size: 26px; white-space: nowrap; }
.info-item b { font-weight: 600; }
.info-item .ar { font-size: .78em; }
.info-item .ar-phone { font-size: .88em; }
.info-item .ar-trn { font-size: .76em; }

.section-title { height: 50px; margin-top: 31px; font-size: 35px; font-weight: 600; line-height: 50px; }
.section-title .ar { font-size: .73em; line-height: 1; }
.table-wrap { position: relative; margin-top: 15px; }
.tx { width: 100%; border-collapse: collapse; table-layout: fixed; }
.c-first { width: 272px; }
.c-std { width: 268px; }
.c-last { width: 431px; }
.tx th {
  height: 157px;
  background: #04579b;
  border-bottom: 2px dashed #fff;
  color: #fff;
  font-size: 24.6px;
  font-weight: 600;
  text-align: center;
  vertical-align: middle;
  line-height: 34px;
  padding: 0 0 6px;
}
.th-ar { display: block; margin-top: 18px; font-size: .95em; font-weight: 500; }
.tx td {
  text-align: center;
  vertical-align: middle;
  color: #6e7ea2;
  font-size: 28px;
  font-weight: 500;
  padding: 3px 0 0;
  border-bottom: 1px dashed #f1f1f2;
}
.tx td .m { margin: 0 auto; position: relative; z-index: 1; }
.r1 td { height: 137px; }
.r2 td { height: 129px; background: #f1f1f2; }
.r3 td { height: 135px; }
.r4 td { height: 60px; background: #f1f1f2; }
.band { position: absolute; left: 828px; top: 268px; display: block; }
```
